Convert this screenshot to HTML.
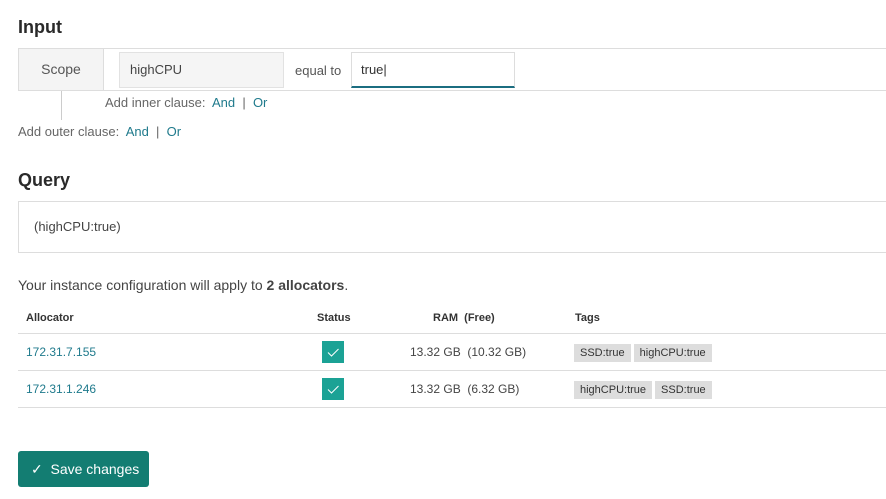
<!DOCTYPE html>
<html><head><style>
*{box-sizing:border-box;margin:0;padding:0}
body{width:886px;height:499px;background:#fff;font-family:"Liberation Sans",sans-serif;color:#333;position:relative;overflow:hidden;font-size:13px}
.a{position:absolute;white-space:nowrap}
h2{position:absolute;font-size:18px;font-weight:bold;color:#2a2a2a}
.lnk{color:#1f7a8c}
.hr{position:absolute;left:18px;right:0;height:1px;background:#ddd}
.tag{display:inline-block;background:#ddd;color:#333;font-size:11px;padding:3px 6px;margin-right:3px}
.chk{position:absolute;width:22px;height:22px;background:#1ba295;left:322px}
</style></head><body>
<h2 style="left:18px;top:17px">Input</h2>
<div class="a" style="left:18px;top:48px;width:868px;height:43px;border:1px solid #ddd;border-right:none"></div>
<div class="a" style="left:19px;top:49px;width:85px;height:41px;background:#f4f4f4;border-right:1px solid #ddd;text-align:center;line-height:41px;font-size:14px;color:#555">Scope</div>
<div class="a" style="left:119px;top:52px;width:165px;height:36px;background:#f5f5f5;border:1px solid #e2e2e2;padding-left:10px;line-height:34px;color:#444">highCPU</div>
<div class="a" style="left:295px;top:63px;color:#555">equal to</div>
<div class="a" style="left:351px;top:52px;width:164px;height:36px;background:#fff;border:1px solid #ddd;border-bottom:2px solid #1b6d80;padding-left:9px;line-height:34px;color:#333">true|</div>
<div class="a" style="left:61px;top:91px;width:1px;height:29px;background:#ccc"></div>
<div class="a" style="left:105px;top:95px;color:#666">Add inner clause:&nbsp; <span class="lnk">And</span> &nbsp;|&nbsp; <span class="lnk">Or</span></div>
<div class="a" style="left:18px;top:124px;color:#666">Add outer clause:&nbsp; <span class="lnk">And</span> &nbsp;|&nbsp; <span class="lnk">Or</span></div>
<h2 style="left:18px;top:170px">Query</h2>
<div class="a" style="left:18px;top:201px;width:870px;height:52px;border:1px solid #ddd;padding-left:15px;line-height:50px;color:#444">(highCPU:true)</div>
<div class="a" style="left:18px;top:277px;color:#444;font-size:14px">Your instance configuration will apply to <b>2 allocators</b>.</div>
<div class="a" style="left:26px;top:312px;font-size:11px;font-weight:bold;color:#333">Allocator</div>
<div class="a" style="left:317px;top:312px;font-size:11px;font-weight:bold;color:#333">Status</div>
<div class="a" style="left:433px;top:312px;font-size:11px;font-weight:bold;color:#333">RAM&nbsp;&nbsp;(Free)</div>
<div class="a" style="left:575px;top:312px;font-size:11px;font-weight:bold;color:#333">Tags</div>
<div class="hr" style="top:333px"></div>
<div class="hr" style="top:370px"></div>
<div class="hr" style="top:407px"></div>
<div class="a lnk" style="left:26px;top:345px;font-size:12px">172.31.7.155</div>
<div class="chk" style="top:341px"><svg width="22" height="22"><path d="M6 11.5l3.5 3.5 7-7" stroke="#fff" stroke-width="1" fill="none"/></svg></div>
<div class="a" style="left:410px;top:345px;font-size:12px;color:#444">13.32 GB&nbsp;&nbsp;(10.32 GB)</div>
<div class="a" style="left:574px;top:344px"><span class="tag">SSD:true</span><span class="tag">highCPU:true</span></div>
<div class="a lnk" style="left:26px;top:382px;font-size:12px">172.31.1.246</div>
<div class="chk" style="top:378px"><svg width="22" height="22"><path d="M6 11.5l3.5 3.5 7-7" stroke="#fff" stroke-width="1" fill="none"/></svg></div>
<div class="a" style="left:410px;top:382px;font-size:12px;color:#444">13.32 GB&nbsp;&nbsp;(6.32 GB)</div>
<div class="a" style="left:574px;top:381px"><span class="tag">highCPU:true</span><span class="tag">SSD:true</span></div>
<div class="a" style="left:18px;top:451px;width:131px;height:36px;background:#137d72;border-radius:3px;color:#fff;font-size:14px;line-height:36px;padding-left:13px">✓&nbsp; Save changes</div>
</body></html>
